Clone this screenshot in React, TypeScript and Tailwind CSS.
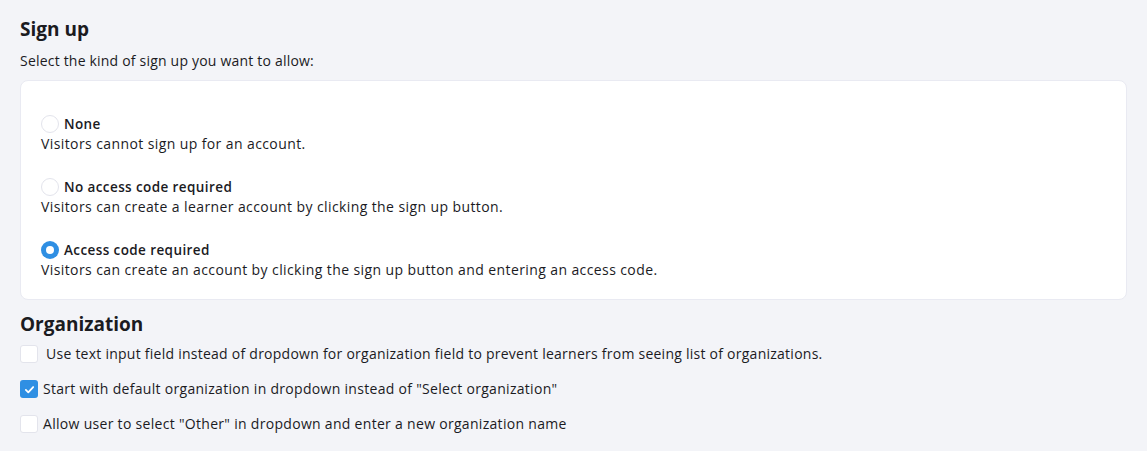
import React, { useState } from 'react';

const font = { fontFamily: '"Open Sans", "Liberation Sans", sans-serif' };

const options = [
  { id: 'none', label: 'None', desc: 'Visitors cannot sign up for an account.' },
  { id: 'open', label: 'No access code required', desc: 'Visitors can create a learner account by clicking the sign up button.' },
  { id: 'code', label: 'Access code required', desc: 'Visitors can create an account by clicking the sign up button and entering an access code.' },
];

const checks = [
  { id: 'text', label: 'Use text input field instead of dropdown for organization field to prevent learners from seeing list of organizations.', extra: true },
  { id: 'default', label: 'Start with default organization in dropdown instead of "Select organization"' },
  { id: 'other', label: 'Allow user to select "Other" in dropdown and enter a new organization name' },
];

export default function App() {
  const [mode, setMode] = useState('code');
  const [checked, setChecked] = useState<Record<string, boolean>>({ default: true });

  return (
    <div className="min-h-[451px] w-full bg-[#f3f4f8] px-5 pt-[15px] text-[#1b1b1f]" style={font}>
      {/* Sign up */}
      <h2 className="text-[19px] font-bold leading-[28px]">Sign up</h2>
      <p className="mt-[8px] text-[14px] leading-[20px] tracking-[0.2px]">Select the kind of sign up you want to allow:</p>

      <div className="mt-[9px] rounded-lg border border-[#e9eaf2] bg-white px-5 pt-[33px] pb-[19px]">
        <div className="flex flex-col gap-[23px]">
          {options.map((o) => (
            <div key={o.id} className="cursor-pointer" onClick={() => setMode(o.id)}>
              <div className="flex items-center gap-[5px]">
                {mode === o.id ? (
                  <span className="flex h-[18px] w-[18px] items-center justify-center rounded-full bg-[#2f8fe3]">
                    <span className="h-[8px] w-[8px] rounded-full bg-white" />
                  </span>
                ) : (
                  <span className="h-[18px] w-[18px] rounded-full border border-[#e3e4ec] bg-white" />
                )}
                <span className="text-[13.5px] font-semibold leading-[20px] tracking-[0.4px]">{o.label}</span>
              </div>
              <p className="text-[14px] leading-[20px] tracking-[0.4px]">{o.desc}</p>
            </div>
          ))}
        </div>
      </div>

      {/* Organization */}
      <h2 className="mt-[10px] text-[19px] font-bold leading-[28px]">Organization</h2>
      <div className="mt-[6px] flex flex-col gap-[15px]">
        {checks.map((c) => (
          <label key={c.id} className="flex cursor-pointer items-center gap-[5px]" onClick={() => setChecked({ ...checked, [c.id]: !checked[c.id] })}>
            {checked[c.id] ? (
              <span className="flex h-[18px] w-[18px] items-center justify-center rounded-[3px] bg-[#2f8fe3]">
                <svg viewBox="0 0 16 16" className="h-[13px] w-[13px]" fill="none" stroke="white" strokeWidth="2.2" strokeLinecap="round" strokeLinejoin="round">
                  <path d="M3.5 8.5l3 3 6-6.5" />
                </svg>
              </span>
            ) : (
              <span className="h-[18px] w-[18px] rounded-[3px] border border-[#e3e4ec] bg-white" />
            )}
            <span className={`text-[14px] font-medium leading-[20px] ${c.extra ? 'ml-[3px] tracking-[0.25px]' : 'tracking-[0.3px]'}`}>{c.label}</span>
          </label>
        ))}
      </div>
    </div>
  );
}
